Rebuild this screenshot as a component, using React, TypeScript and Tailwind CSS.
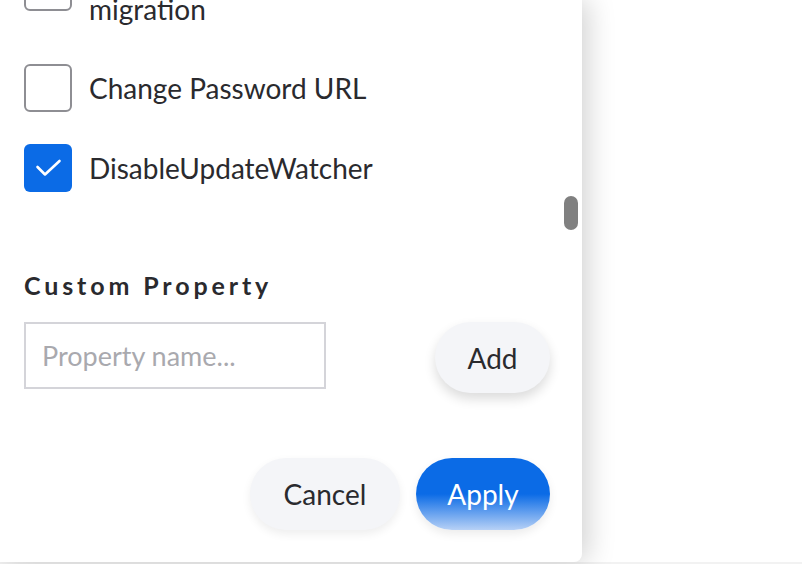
import React from "react";

function Checkbox({ checked }: { checked?: boolean }) {
  if (checked) {
    return (
      <div className="w-12 h-12 shrink-0 rounded-[6px] bg-[#0b6be6]">
        <svg width="48" height="48" viewBox="0 0 48 48" fill="none">
          <path d="M13.5 23l7.5 7.5L35.5 17" stroke="white" strokeWidth="2.6" strokeLinecap="round" strokeLinejoin="round" />
        </svg>
      </div>
    );
  }
  return <div className="w-12 h-12 shrink-0 rounded-[6px] border-2 border-[#8e8e93] bg-white" />;
}

export default function App() {
  return (
    <div
      className="w-[802px] h-[564px] bg-white overflow-hidden text-[#2a2a2e]"
      style={{ fontFamily: "Lato, 'Open Sans', sans-serif" }}
    >
      <div className="relative w-[582px] h-[562px] bg-white rounded-br-[8px] shadow-[6px_0_28px_rgba(0,0,0,0.18)] overflow-hidden">
        <div className="px-6 -mt-[40px]">
          <div className="flex items-start gap-[17px]">
            <div className="mt-[3px]">
              <Checkbox />
            </div>
            <div className="text-[28px] leading-[33px]">
              Skip legacy data
              <br />
              migration
            </div>
          </div>
          <div className="flex items-center gap-[17px] mt-[38px]">
            <Checkbox />
            <span className="text-[28px]">Change Password URL</span>
          </div>
          <div className="flex items-center gap-[17px] mt-8">
            <Checkbox checked />
            <span className="text-[28px]">DisableUpdateWatcher</span>
          </div>

          <h2 className="mt-[77px] text-[25px] font-bold tracking-[0.155em] leading-8">Custom Property</h2>

          <div className="mt-[21px] flex items-start justify-between pr-2">
            <input
              className="w-[302px] h-[67px] border-2 border-[#d4d4d9] px-4 text-[27px] outline-none placeholder:text-[#a9a9ae]"
              placeholder="Property name..."
            />
            <button className="w-[115px] h-[71px] rounded-full bg-[#f4f5f8] text-[28px] shadow-[0_6px_12px_rgba(0,0,0,0.14)]">
              Add
            </button>
          </div>

          <div className="mt-[65px] flex justify-end gap-4 pr-2">
            <button className="w-[150px] h-[72px] rounded-full bg-[#f4f5f8] text-[28px] shadow-[0_4px_10px_rgba(0,0,0,0.07)]">
              Cancel
            </button>
            <button className="w-[134px] h-[72px] rounded-full text-white text-[28px] bg-[linear-gradient(to_bottom,#0b6be6_50%,#b7d1f6_100%)] shadow-[0_4px_10px_rgba(0,0,0,0.08)]">
              Apply
            </button>
          </div>
        </div>

        <div className="absolute left-[564px] top-[196px] w-[14px] h-[34px] rounded-full bg-[#808080]" />
      </div>
      <div className="h-[2px] bg-[#f2f2f2]" />
    </div>
  );
}
